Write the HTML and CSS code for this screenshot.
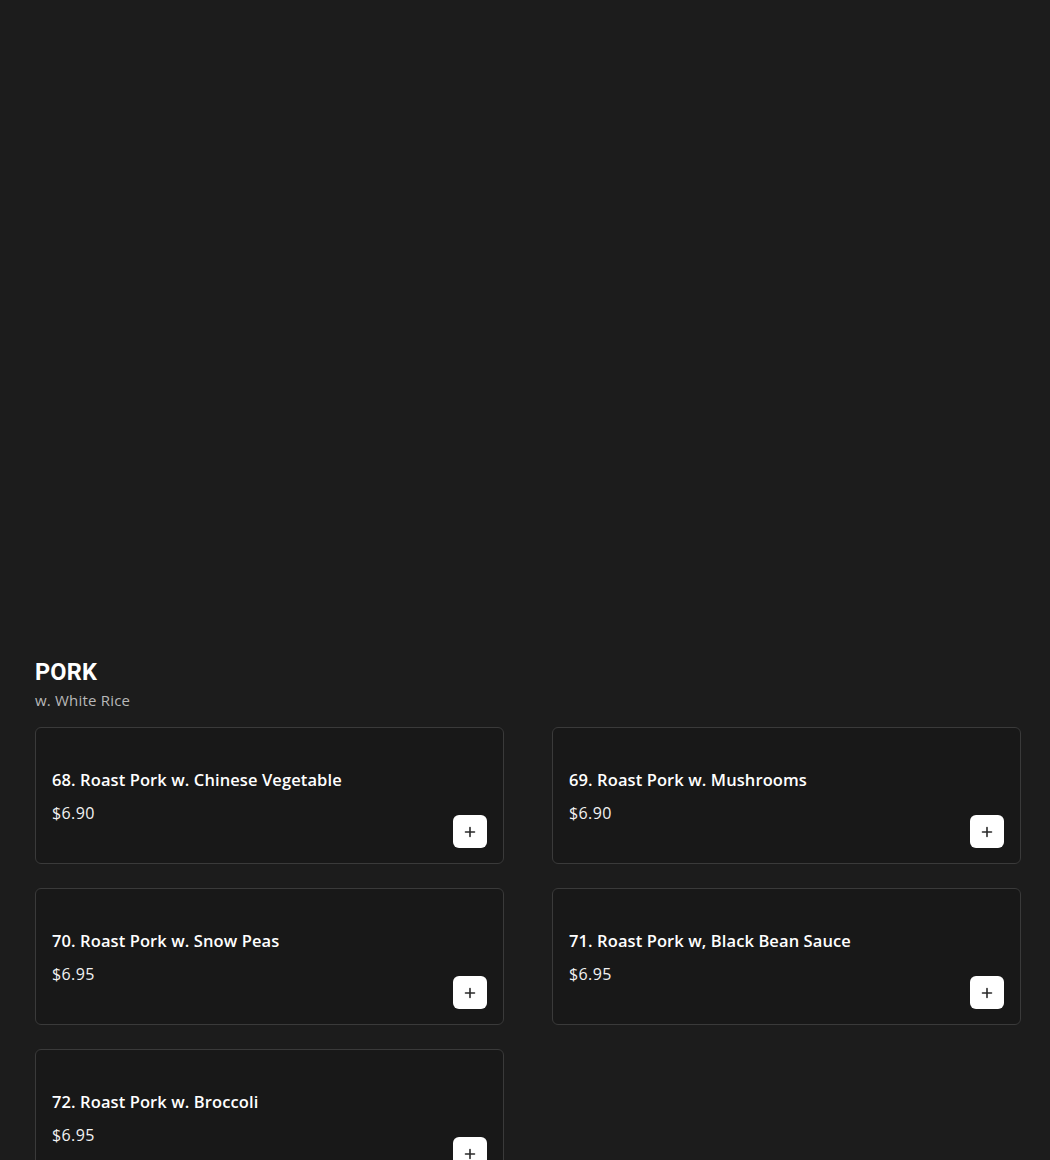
FILE: index.html
```html
<!DOCTYPE html>
<html lang="en">
<head>
<meta charset="utf-8">
<title>Pork</title>
<link rel="stylesheet" href="styles.css">
</head>
<body>
<main class="page">
  <div class="hero"></div>
  <section class="category">
    <h2 class="cat-title">PORK</h2>
    <p class="cat-sub">w. White Rice</p>
    <div class="grid">
      <article class="card">
        <div class="info">
          <h3 class="name">68. Roast Pork w. Chinese Vegetable</h3>
          <p class="price">$6.90</p>
        </div>
        <button class="add" aria-label="Add"><svg viewBox="0 0 12 12" width="12" height="12"><path d="M6 1.5v9M1.5 6h9" stroke="#2a2a2a" stroke-width="1.6" stroke-linecap="round"/></svg></button>
      </article>
      <article class="card">
        <div class="info">
          <h3 class="name">69. Roast Pork w. Mushrooms</h3>
          <p class="price">$6.90</p>
        </div>
        <button class="add" aria-label="Add"><svg viewBox="0 0 12 12" width="12" height="12"><path d="M6 1.5v9M1.5 6h9" stroke="#2a2a2a" stroke-width="1.6" stroke-linecap="round"/></svg></button>
      </article>
      <article class="card">
        <div class="info">
          <h3 class="name">70. Roast Pork w. Snow Peas</h3>
          <p class="price">$6.95</p>
        </div>
        <button class="add" aria-label="Add"><svg viewBox="0 0 12 12" width="12" height="12"><path d="M6 1.5v9M1.5 6h9" stroke="#2a2a2a" stroke-width="1.6" stroke-linecap="round"/></svg></button>
      </article>
      <article class="card">
        <div class="info">
          <h3 class="name">71. Roast Pork w, Black Bean Sauce</h3>
          <p class="price">$6.95</p>
        </div>
        <button class="add" aria-label="Add"><svg viewBox="0 0 12 12" width="12" height="12"><path d="M6 1.5v9M1.5 6h9" stroke="#2a2a2a" stroke-width="1.6" stroke-linecap="round"/></svg></button>
      </article>
      <article class="card">
        <div class="info">
          <h3 class="name">72. Roast Pork w. Broccoli</h3>
          <p class="price">$6.95</p>
        </div>
        <button class="add" aria-label="Add"><svg viewBox="0 0 12 12" width="12" height="12"><path d="M6 1.5v9M1.5 6h9" stroke="#2a2a2a" stroke-width="1.6" stroke-linecap="round"/></svg></button>
      </article>
    </div>
  </section>
</main>
</body>
</html>
```
FILE: styles.css
```css
html, body {
  margin: 0;
  padding: 0;
  background: #1c1c1c;
}
body {
  font-family: "Open Sans", "Liberation Sans", sans-serif;
  color: #ffffff;
}
.page {
  padding: 0 29px 0 35px;
}
.hero {
  height: 658px;
}
.cat-title {
  margin: 0;
  font-family: Roboto, "Liberation Sans", sans-serif;
  font-weight: 700;
  font-size: 23.5px;
  line-height: 28px;
  letter-spacing: 0.2px;
}
.cat-sub {
  margin: 4px 0 0;
  font-size: 15px;
  line-height: 20px;
  color: #b8b8b8;
  letter-spacing: 0.2px;
}
.grid {
  margin-top: 17px;
  display: grid;
  grid-template-columns: 1fr 1fr;
  column-gap: 48px;
  row-gap: 24px;
}
.card {
  box-sizing: border-box;
  height: 137px;
  border: 1px solid #3a3a3a;
  border-radius: 6px;
  background: #181818;
  padding: 16px 16px 15px 16px;
  display: flex;
  justify-content: space-between;
  align-items: flex-end;
}
.info {
  align-self: flex-start;
  padding-top: 25px;
}
.name {
  margin: 0;
  font-size: 16.5px;
  font-weight: 600;
  line-height: 22px;
  letter-spacing: 0.1px;
}
.price {
  margin: 11px 0 0;
  font-size: 16px;
  line-height: 22px;
  color: #f2f2f2;
  letter-spacing: 0.4px;
}
.add {
  width: 34px;
  height: 33px;
  border: none;
  border-radius: 6px;
  background: #ffffff;
  padding: 0;
  display: flex;
  align-items: center;
  justify-content: center;
  cursor: pointer;
}
.add svg {
  display: block;
}
```
